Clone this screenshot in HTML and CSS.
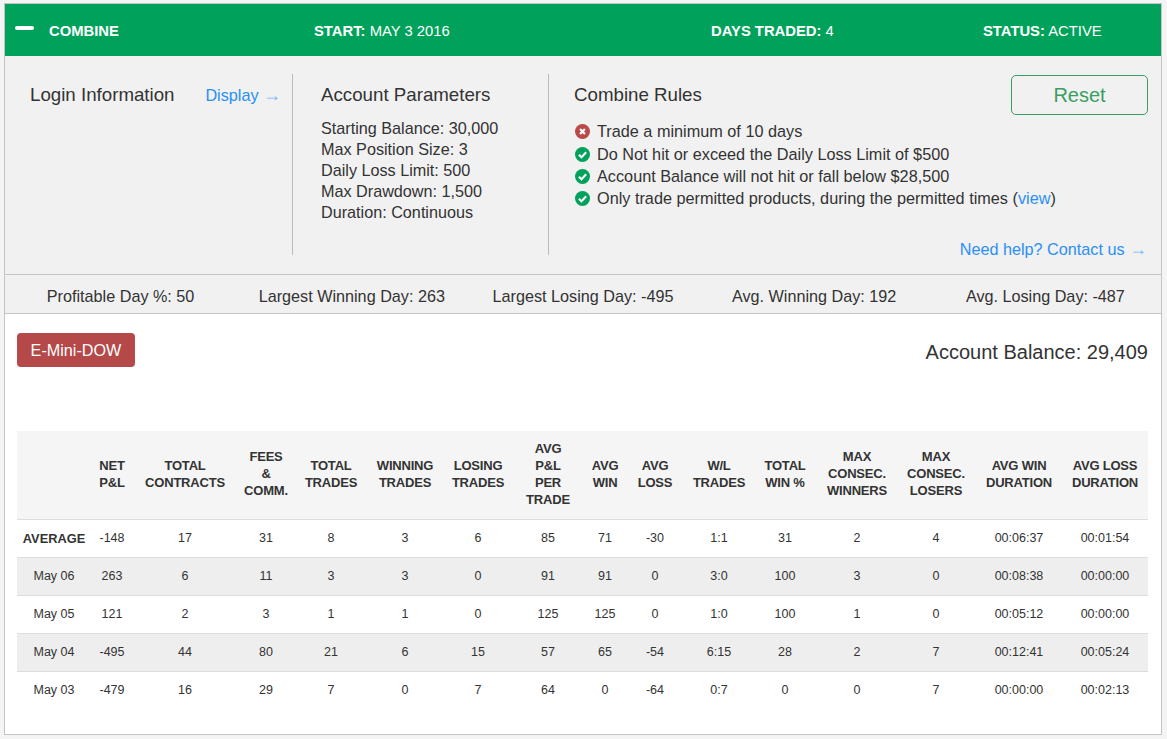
FILE: index.html
```html
<!DOCTYPE html>
<html lang="en">
<head>
    <meta charset="UTF-8">
    <title>Combine</title>
    <link rel="stylesheet" href="styles.css">
</head>
<body>
    <div class="combine">
        <!-- Header bar -->
        <div class="combine-bar">
            <div class="bar-name"><span class="bar-toggle"></span><b>COMBINE</b></div>
            <div class="bar-start"><b>START:</b> MAY 3 2016</div>
            <div class="bar-days"><b>DAYS TRADED:</b> 4</div>
            <div class="bar-status"><b>STATUS:</b> ACTIVE</div>
        </div>

        <!-- Info panel -->
        <div class="info-panel">
            <div class="info-col login-col">
                <h3>Login Information</h3>
                <a href="#" class="link display-link">Display <span class="arrow">→</span></a>
            </div>
            <div class="info-col params-col">
                <h3>Account Parameters</h3>
                <ul class="params">
                    <li>Starting Balance: 30,000</li>
                    <li>Max Position Size: 3</li>
                    <li>Daily Loss Limit: 500</li>
                    <li>Max Drawdown: 1,500</li>
                    <li>Duration: Continuous</li>
                </ul>
            </div>
            <div class="rules-col">
                <div class="rules-head">
                    <h3>Combine Rules</h3>
                    <button class="reset-btn">Reset</button>
                </div>
                <ul class="rules">
                    <li>
                        <svg class="rule-icon" viewBox="0 0 16 16"><circle cx="8" cy="8" r="8" fill="#b94a48"/><path d="M5.400 5.400l5.200 5.200M10.600 5.400l-5.200 5.200" stroke="#fff" stroke-width="2.300"/></svg>
                        Trade a minimum of 10 days
                    </li>
                    <li>
                        <svg class="rule-icon" viewBox="0 0 16 16"><circle cx="8" cy="8" r="8" fill="#00a25b"/><path d="M4.200 8.200l2.700 2.700 5-5.200" fill="none" stroke="#fff" stroke-width="2.300"/></svg>
                        Do Not hit or exceed the Daily Loss Limit of $500
                    </li>
                    <li>
                        <svg class="rule-icon" viewBox="0 0 16 16"><circle cx="8" cy="8" r="8" fill="#00a25b"/><path d="M4.200 8.200l2.700 2.700 5-5.200" fill="none" stroke="#fff" stroke-width="2.300"/></svg>
                        Account Balance will not hit or fall below $28,500
                    </li>
                    <li>
                        <svg class="rule-icon" viewBox="0 0 16 16"><circle cx="8" cy="8" r="8" fill="#00a25b"/><path d="M4.200 8.200l2.700 2.700 5-5.200" fill="none" stroke="#fff" stroke-width="2.300"/></svg>
                        <span>Only trade permitted products, during the permitted times (<a href="#" class="link">view</a>)</span>
                    </li>
                </ul>
                <a href="#" class="link help-link">Need help? Contact us <span class="arrow">→</span></a>
            </div>
        </div>

        <!-- Stats strip -->
        <div class="stats">
            <div>Profitable Day %: 50</div>
            <div>Largest Winning Day: 263</div>
            <div>Largest Losing Day: -495</div>
            <div>Avg. Winning Day: 192</div>
            <div>Avg. Losing Day: -487</div>
        </div>

        <div class="results">
            <div class="results-top">
                <button class="product-btn">E-Mini-DOW</button>
                <div class="balance">Account Balance: 29,409</div>
            </div>

            <table class="days">
                <colgroup>
                    <col><col><col><col><col><col><col><col>
                    <col><col><col><col><col><col><col><col>
                </colgroup>
                <thead>
                    <tr>
                        <th></th>
                        <th>NET<br>P&amp;L</th>
                        <th>TOTAL<br>CONTRACTS</th>
                        <th>FEES<br>&amp;<br>COMM.</th>
                        <th>TOTAL<br>TRADES</th>
                        <th>WINNING<br>TRADES</th>
                        <th>LOSING<br>TRADES</th>
                        <th>AVG<br>P&amp;L<br>PER<br>TRADE</th>
                        <th>AVG<br>WIN</th>
                        <th>AVG<br>LOSS</th>
                        <th>W/L<br>TRADES</th>
                        <th>TOTAL<br>WIN %</th>
                        <th>MAX<br>CONSEC.<br>WINNERS</th>
                        <th>MAX<br>CONSEC.<br>LOSERS</th>
                        <th>AVG WIN<br>DURATION</th>
                        <th>AVG LOSS<br>DURATION</th>
                    </tr>
                </thead>
                <tbody>
                    <tr class="avg-row"><td>AVERAGE</td><td>-148</td><td>17</td><td>31</td><td>8</td><td>3</td><td>6</td><td>85</td><td>71</td><td>-30</td><td>1:1</td><td>31</td><td>2</td><td>4</td><td>00:06:37</td><td>00:01:54</td></tr>
                    <tr><td>May 06</td><td>263</td><td>6</td><td>11</td><td>3</td><td>3</td><td>0</td><td>91</td><td>91</td><td>0</td><td>3:0</td><td>100</td><td>3</td><td>0</td><td>00:08:38</td><td>00:00:00</td></tr>
                    <tr><td>May 05</td><td>121</td><td>2</td><td>3</td><td>1</td><td>1</td><td>0</td><td>125</td><td>125</td><td>0</td><td>1:0</td><td>100</td><td>1</td><td>0</td><td>00:05:12</td><td>00:00:00</td></tr>
                    <tr><td>May 04</td><td>-495</td><td>44</td><td>80</td><td>21</td><td>6</td><td>15</td><td>57</td><td>65</td><td>-54</td><td>6:15</td><td>28</td><td>2</td><td>7</td><td>00:12:41</td><td>00:05:24</td></tr>
                    <tr><td>May 03</td><td>-479</td><td>16</td><td>29</td><td>7</td><td>0</td><td>7</td><td>64</td><td>0</td><td>-64</td><td>0:7</td><td>0</td><td>0</td><td>7</td><td>00:00:00</td><td>00:02:13</td></tr>
                </tbody>
            </table>
        </div>
    </div>
</body>
</html>
```
FILE: styles.css
```css
* {
    margin: 0;
    padding: 0;
    box-sizing: border-box;
}

body {
    font-family: "Liberation Sans", Arial, sans-serif;
    background: #f4f4f4;
    color: #333;
    padding: 3px 4px 0;
}

h3 {
    font-size: 18.72px;
    font-weight: normal;
    line-height: 22px;
}

ul {
    list-style: none;
}

.link {
    color: #2a8ff7;
    text-decoration: none;
}

.arrow {
    color: #7fb6f8;
    font-size: 18px;
    line-height: 1;
}

.combine {
    width: 1158px;
    height: 732px;
    background: #fff;
    border: 1px solid #c4c4c4;
}

.combine-bar {
    display: flex;
    align-items: center;
    height: 52px;
    padding-top: 1px;
    background: #00a25b;
    color: #fff;
    font-size: 14.8px;
}

.bar-name {
    display: flex;
    align-items: center;
    width: 309px;
    padding-left: 10px;
}

.bar-toggle {
    width: 19px;
    height: 4px;
    margin: -6px 15px 0 0;
    background: #fff;
    border-radius: 2px;
}

.bar-start {
    width: 397px;
}

.bar-days {
    width: 272px;
}

.info-panel {
    display: flex;
    height: 219px;
    padding-top: 18px;
    background: #f1f1f1;
    border-bottom: 1px solid #c4c4c4;
    font-size: 16.2px;
}

.info-col {
    height: 181px;
    border-right: 1px solid #bbb;
}

.info-col h3 {
    padding-top: 10px;
}

.login-col {
    display: flex;
    justify-content: space-between;
    align-items: flex-start;
    width: 288px;
    padding: 0 11px 0 25px;
}

.display-link {
    margin-top: 12px;
}

.params-col {
    width: 256px;
    padding-left: 28px;
}

.params {
    margin-top: 12px;
    line-height: 21px;
}

.rules-col {
    flex: 1;
    padding: 1px 13px 0 25px;
}

.rules-head {
    display: flex;
    justify-content: space-between;
    align-items: center;
}

.reset-btn {
    width: 137px;
    height: 40px;
    background: transparent;
    border: 1px solid #3a9e63;
    border-radius: 5px;
    color: #3a9e63;
    font-family: inherit;
    font-size: 20px;
}

.rules {
    margin: 5px 0 0 1px;
    font-size: 16.25px;
    line-height: 22px;
}

.rules li {
    display: flex;
    align-items: center;
    gap: 7px;
}

.rules li:first-child {
    margin-bottom: 1px;
}

.rule-icon {
    width: 15px;
    height: 15px;
    flex-shrink: 0;
}

.help-link {
    display: block;
    margin: 31px 1px 0 0;
    text-align: right;
}

.stats {
    display: grid;
    grid-template-columns: repeat(5, 1fr);
    height: 39px;
    background: #f1f1f1;
    border-bottom: 1px solid #c4c4c4;
    font-size: 16.2px;
    line-height: 43px;
    text-align: center;
}

.results {
    padding: 19px 13px 0 12px;
}

.results-top {
    display: flex;
    justify-content: space-between;
    align-items: flex-start;
    height: 98px;
}

.product-btn {
    width: 118px;
    height: 34px;
    padding-top: 1px;
    background: #b54848;
    border: 0;
    border-radius: 4px;
    color: #fff;
    font-family: inherit;
    font-size: 16.2px;
}

.balance {
    margin-top: 7px;
    font-size: 20px;
    line-height: 24px;
}

.days {
    width: 1131px;
    table-layout: fixed;
    border-collapse: collapse;
    font-size: 12.5px;
    text-align: center;
}

.days col:nth-child(1) { width: 74px; }
.days col:nth-child(2) { width: 42px; }
.days col:nth-child(3) { width: 104px; }
.days col:nth-child(4) { width: 58px; }
.days col:nth-child(5) { width: 72px; }
.days col:nth-child(6) { width: 76px; }
.days col:nth-child(7) { width: 70px; }
.days col:nth-child(8) { width: 70px; }
.days col:nth-child(9) { width: 44px; }
.days col:nth-child(10) { width: 56px; }
.days col:nth-child(11) { width: 72px; }
.days col:nth-child(12) { width: 60px; }
.days col:nth-child(13) { width: 84px; }
.days col:nth-child(14) { width: 74px; }
.days col:nth-child(15) { width: 89px; }
.days col:nth-child(16) { width: 86px; }

.days th {
    height: 88px;
    padding-bottom: 2px;
    background: #f5f5f5;
    border-bottom: 1px solid #ddd;
    font-size: 13px;
    line-height: 17px;
    letter-spacing: -0.2px;
}

.days td {
    height: 38px;
    border-bottom: 1px solid #ddd;
}

.days th:nth-child(15),
.days td:nth-child(15) {
    padding-left: 3px;
}

.days tbody tr:last-child td {
    border-bottom: 0;
}

.days tbody tr:nth-child(even) td {
    background: #eee;
}

.avg-row td:first-child {
    font-size: 12.8px;
    font-weight: bold;
}
```
